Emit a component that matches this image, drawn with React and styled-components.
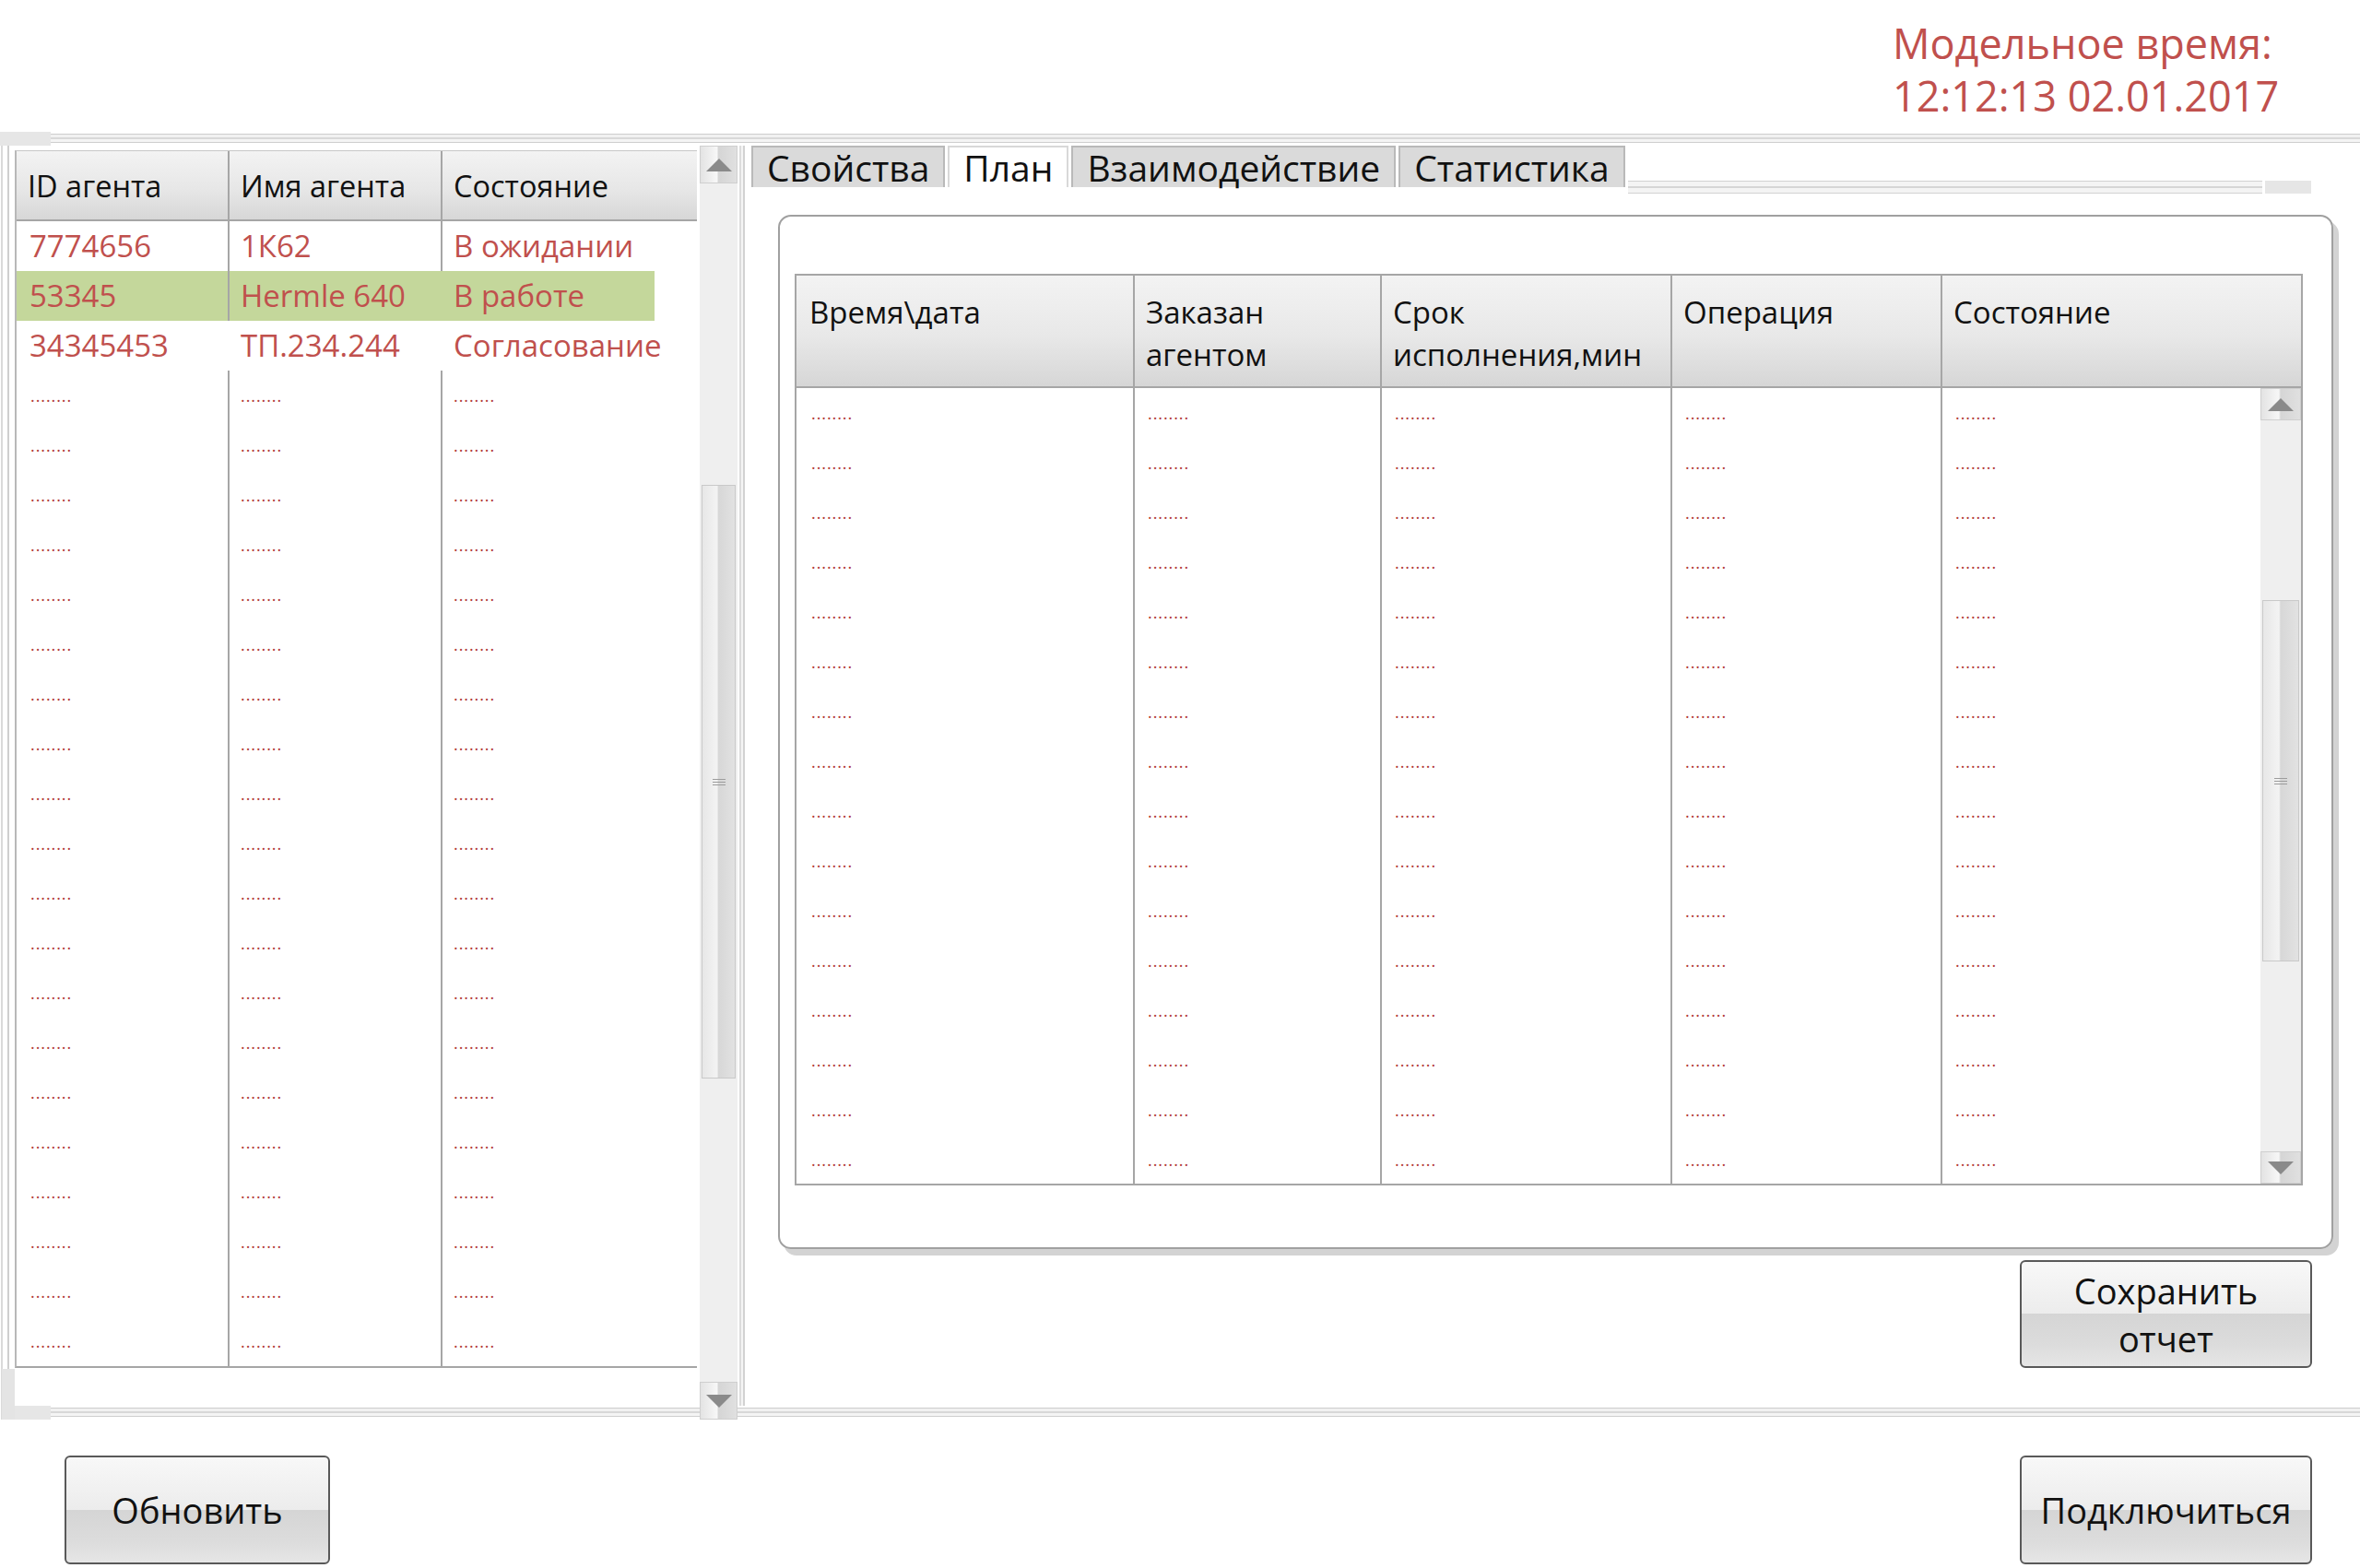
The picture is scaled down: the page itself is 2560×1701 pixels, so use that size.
import React from 'react'
import styled, { createGlobalStyle } from 'styled-components'

const RED = '#c0504d'
const LINE = '#a6a6a6'
const FONT = "'Open Sans', 'Noto Sans', 'DejaVu Sans', sans-serif"

const GlobalStyle = createGlobalStyle`
  html, body {
    margin: 0;
    padding: 0;
    background: #fff;
  }
  body {
    width: 2560px;
    height: 1701px;
    overflow: hidden;
    font-family: ${FONT};
  }
  * {
    box-sizing: border-box;
  }
`

const agents = [
  { id: '7774656', name: '1К62', state: 'В ожидании', seps: [true, true] },
  { id: '53345', name: 'Hermle 640', state: 'В работе', seps: [true, false], active: true },
  { id: '34345453', name: 'ТП.234.244', state: 'Согласование', seps: [false, false] },
]
const EMPTY_AGENTS = 20
const PLAN_ROWS = 16
const planCols = ['Время\\дата', 'Заказан\nагентом', 'Срок\nисполнения,мин', 'Операция', 'Состояние']
const tabs = ['Свойства', 'План', 'Взаимодействие', 'Статистика']

// двойная полоска рамки (сверху и снизу)
const doubleLine = `linear-gradient(to bottom,
  #fff 0 2px, #cdcdcd 2px 3px, #f1f1f1 3px 6px, #d8d8d8 6px 8px,
  #f4f4f4 8px 11px, #cfcfcf 11px 12px, #fff 12px)`

const Page = styled.div`
  width: 2560px;
  height: 1701px;
  display: flex;
  flex-direction: column;
`
const Header = styled.header`
  height: 143px;
  flex-shrink: 0;
  padding: 18px 0 0 2053px;
`
const Clock = styled.div`
  font-family: ${FONT};
  font-size: 45px;
  line-height: 57px;
  color: ${RED};
  white-space: nowrap;
`
const Frame = styled.div`
  height: 1397px;
  flex-shrink: 0;
  display: flex;
  flex-direction: column;
`
const Rule = styled.div`
  height: 15px;
  flex-shrink: 0;
  display: flex;
  background: ${doubleLine};
  &::before {
    content: '';
    width: ${(props) => props.$block || 0}px;
    background: #e6e6e6;
  }
`
const Body = styled.div`
  flex: 1;
  min-height: 0;
  display: flex;
`
const LeftEdge = styled.div`
  width: 16px;
  flex-shrink: 0;
  display: flex;
  flex-direction: column;
  background: linear-gradient(to right,
    #fff 0 1px, #dadada 1px 3px, #fff 3px 8px, #cfcfcf 8px 10px, #fff 10px);
`
const EdgeFoot = styled.div`
  margin-top: auto;
  margin-left: 2px;
  height: 55px;
  background: #e4e4e4;
`
const LeftPanel = styled.section`
  width: 743px;
  flex-shrink: 0;
  display: flex;
  flex-direction: column;
  padding-top: 5px;
`
const AgentTable = styled.div`
  width: 740px;
  border-left: 2px solid #b8b8b8;
  border-top: 1px solid #c8c8c8;
  border-bottom: 2px solid ${LINE};
`
const AgentGrid = styled.div`
  display: grid;
  grid-template-columns: 229px 231px 1fr;
  height: ${(props) => (props.$head ? 76 : 54)}px;
  background: ${(props) =>
    props.$head
      ? 'linear-gradient(to bottom, #f3f3f3, #e7e7e7 55%, #d7d7d7)'
      : props.$active
        ? 'linear-gradient(to right, #c4d79b calc(100% - 46px), #fff 0)'
        : '#fff'};
  border-bottom: ${(props) => (props.$head ? `2px solid ${LINE}` : 'none')};
`
const HeadText = styled.div`
  display: flex;
  align-items: center;
  padding-left: 12px;
  font-family: ${FONT};
  font-size: 32.5px;
  color: #111;
  border-left: ${(props) => (props.$sep ? `2px solid ${LINE}` : 'none')};
`
const AgentCell = styled.div`
  padding-left: 12px;
  font-family: ${FONT};
  font-size: 33px;
  line-height: 54px;
  color: ${RED};
  white-space: nowrap;
  border-left: 2px solid ${(props) => (props.$sep ? LINE : 'transparent')};
`
const Dots = styled.div`
  padding-left: ${(props) => props.$pad || 14}px;
  font-family: ${FONT};
  font-size: 18px;
  line-height: 54px;
  letter-spacing: 0.9px;
  color: #b23b38;
  border-left: 2px solid ${(props) => (props.$sep ? LINE : 'transparent')};
`
const Spacer = styled.div`
  flex: 1;
`
const Scrollbar = styled.div`
  width: ${(props) => props.$w}px;
  flex-shrink: 0;
  display: flex;
  flex-direction: column;
  background: #efefef;
`
const ScrollBtn = styled.div`
  height: ${(props) => props.$h}px;
  flex-shrink: 0;
  display: flex;
  align-items: center;
  justify-content: center;
  border: 1px solid #cfcfcf;
  background: linear-gradient(to right, #e3e3e3, #f7f7f7 45%, #d5d5d5 50%, #e0e0e0);
  &::after {
    content: '';
    border-left: 14px solid transparent;
    border-right: 14px solid transparent;
    ${(props) => (props.$down ? 'border-top' : 'border-bottom')}: 14px solid #8a8a8a;
  }
`
const Track = styled.div`
  flex: 1;
`
const Thumb = styled.div`
  margin: ${(props) => props.$top}px 2px 0;
  height: ${(props) => props.$h}px;
  display: flex;
  align-items: center;
  justify-content: center;
  border: 1px solid #c9c9c9;
  background: linear-gradient(to right, #e7e7e7, #f3f3f3 45%, #d7d7d7 50%, #e2e2e2);
`
const Grip = styled.div`
  width: 14px;
  height: 7px;
  background: repeating-linear-gradient(to bottom, #9c9c9c 0 1px, transparent 1px 3px);
`
const Divider = styled.div`
  width: 12px;
  flex-shrink: 0;
  display: flex;
  flex-direction: column;
`
const DividerLines = styled.div`
  flex: 1;
  background: linear-gradient(to right,
    #fff 0 2px, #dcdcdc 2px 4px, #f5f5f5 4px 6px, #d2d2d2 6px 8px, #fff 8px);
`
const RightPanel = styled.section`
  flex: 1;
  min-width: 0;
  display: flex;
  flex-direction: column;
`
const TabStrip = styled.div`
  height: 52px;
  flex-shrink: 0;
  display: flex;
  align-items: flex-start;
  gap: 3px;
  padding-left: 3px;
`
const Tab = styled.div`
  height: 45px;
  padding: 0 15px;
  display: flex;
  align-items: center;
  font-family: ${FONT};
  font-size: 39px;
  color: #111;
  white-space: nowrap;
  background: ${(props) => (props.$active ? '#fff' : '#dadada')};
  border: 2px solid ${(props) => (props.$active ? '#d8d8d8' : '#b9b9b9')};
  border-bottom: none;
`
const TabLine = styled.div`
  flex: 1;
  height: 14px;
  margin-top: 38px;
  border-top: 1px solid #d2d2d2;
  border-bottom: 1px solid #d2d2d2;
  background: linear-gradient(to bottom, #f4f4f4 0 5px, #d6d6d6 5px 7px, #f4f4f4 7px);
`
const TabBlock = styled.div`
  width: 50px;
  height: 14px;
  margin-top: 38px;
  margin-right: 53px;
  background: #e6e6e6;
`
const Card = styled.div`
  height: 1122px;
  flex-shrink: 0;
  margin: 23px 29px 0 32px;
  padding: 62px 31px 0 16px;
  border: 2px solid #a0a0a0;
  border-radius: 14px;
  box-shadow: 6px 7px 0 #d3d3d3;
`
const PlanTable = styled.div`
  width: 1636px;
  height: 989px;
  display: flex;
  flex-direction: column;
  border: 2px solid ${LINE};
`
const PlanGrid = styled.div`
  display: grid;
  grid-template-columns: 365px 268px 315px 293px 1fr;
`
const PlanHead = styled(PlanGrid)`
  height: 122px;
  flex-shrink: 0;
  border-bottom: 2px solid ${LINE};
  background: linear-gradient(to bottom, #f3f3f3, #e8e8e8 55%, #d6d6d6);
`
const PlanHeadCell = styled.div`
  padding: 17px 0 0 12px;
  font-family: ${FONT};
  font-size: 33px;
  line-height: 46px;
  color: #111;
  white-space: pre-line;
  border-left: 2px solid ${(props) => (props.$sep ? LINE : 'transparent')};
`
const PlanBody = styled.div`
  flex: 1;
  min-height: 0;
  display: flex;
`
const PlanRows = styled.div`
  flex: 1;
  display: grid;
  grid-template-rows: repeat(${PLAN_ROWS}, 1fr);
`
const SaveRow = styled.div`
  display: flex;
  justify-content: flex-end;
  padding-right: 52px;
  margin-top: 12px;
`
const Button = styled.button`
  width: ${(props) => props.$w}px;
  height: ${(props) => props.$h || 118}px;
  padding: 0;
  border: 2px solid #595959;
  border-radius: 6px;
  background: linear-gradient(to bottom,
    #f8f8f8 0%, #ececec 50%, #d5d5d5 50%, #dcdcdc 80%, #e6e6e6 100%);
  font-family: ${FONT};
  font-size: 38px;
  line-height: 52px;
  color: #111;
  white-space: pre-line;
  cursor: pointer;
`
const Footer = styled.footer`
  flex: 1;
  display: flex;
  justify-content: space-between;
  align-items: flex-start;
  padding: 39px 52px 0 70px;
`

const ScrollBar = ({ w, btn, thumbTop, thumbH }) => (
  <Scrollbar $w={w}>
    <ScrollBtn $h={btn} />
    <Track>
      <Thumb $top={thumbTop} $h={thumbH}>
        <Grip />
      </Thumb>
    </Track>
    <ScrollBtn $h={btn} $down />
  </Scrollbar>
)

const DOTS = '........'

const App = () => {
  return (
    <Page>
      <GlobalStyle />
      <Header>
        <Clock>Модельное время:</Clock>
        <Clock>12:12:13 02.01.2017</Clock>
      </Header>

      <Frame>
        <Rule $block={55} />
        <Body>
          <LeftEdge>
            <EdgeFoot />
          </LeftEdge>

          <LeftPanel>
            <AgentTable>
              <AgentGrid $head>
                <HeadText>ID агента</HeadText>
                <HeadText $sep>Имя агента</HeadText>
                <HeadText $sep>Состояние</HeadText>
              </AgentGrid>
              {agents.map((a) => (
                <AgentGrid key={a.id} $active={a.active}>
                  <AgentCell>{a.id}</AgentCell>
                  <AgentCell $sep={a.seps[0]}>{a.name}</AgentCell>
                  <AgentCell $sep={a.seps[1]}>{a.state}</AgentCell>
                </AgentGrid>
              ))}
              {Array.from({ length: EMPTY_AGENTS }).map((_, i) => (
                <AgentGrid key={i}>
                  <Dots $pad={13}>{DOTS}</Dots>
                  <Dots $pad={12} $sep>{DOTS}</Dots>
                  <Dots $pad={12} $sep>{DOTS}</Dots>
                </AgentGrid>
              ))}
            </AgentTable>
            <Spacer />
            <Rule $block={39} />
          </LeftPanel>

          <ScrollBar w={41} btn={41} thumbTop={327} thumbH={644} />

          <Divider>
            <DividerLines />
            <Rule />
          </Divider>

          <RightPanel>
            <TabStrip>
              {tabs.map((t) => (
                <Tab key={t} $active={t === 'План'}>
                  {t}
                </Tab>
              ))}
              <TabLine />
              <TabBlock />
            </TabStrip>

            <Card>
              <PlanTable>
                <PlanHead>
                  {planCols.map((c, i) => (
                    <PlanHeadCell key={c} $sep={i > 0}>
                      {c}
                    </PlanHeadCell>
                  ))}
                </PlanHead>
                <PlanBody>
                  <PlanRows>
                    {Array.from({ length: PLAN_ROWS }).map((_, r) => (
                      <PlanGrid key={r}>
                        {planCols.map((c, i) => (
                          <Dots key={c} $pad={14} $sep={i > 0}>
                            {DOTS}
                          </Dots>
                        ))}
                      </PlanGrid>
                    ))}
                  </PlanRows>
                  <ScrollBar w={44} btn={35} thumbTop={195} thumbH={392} />
                </PlanBody>
              </PlanTable>
            </Card>

            <SaveRow>
              <Button $w={317} $h={117}>
                {'Сохранить\nотчет'}
              </Button>
            </SaveRow>
            <Spacer />
            <Rule />
          </RightPanel>
        </Body>
      </Frame>

      <Footer>
        <Button $w={288}>Обновить</Button>
        <Button $w={317}>Подключиться</Button>
      </Footer>
    </Page>
  )
}

export default App
